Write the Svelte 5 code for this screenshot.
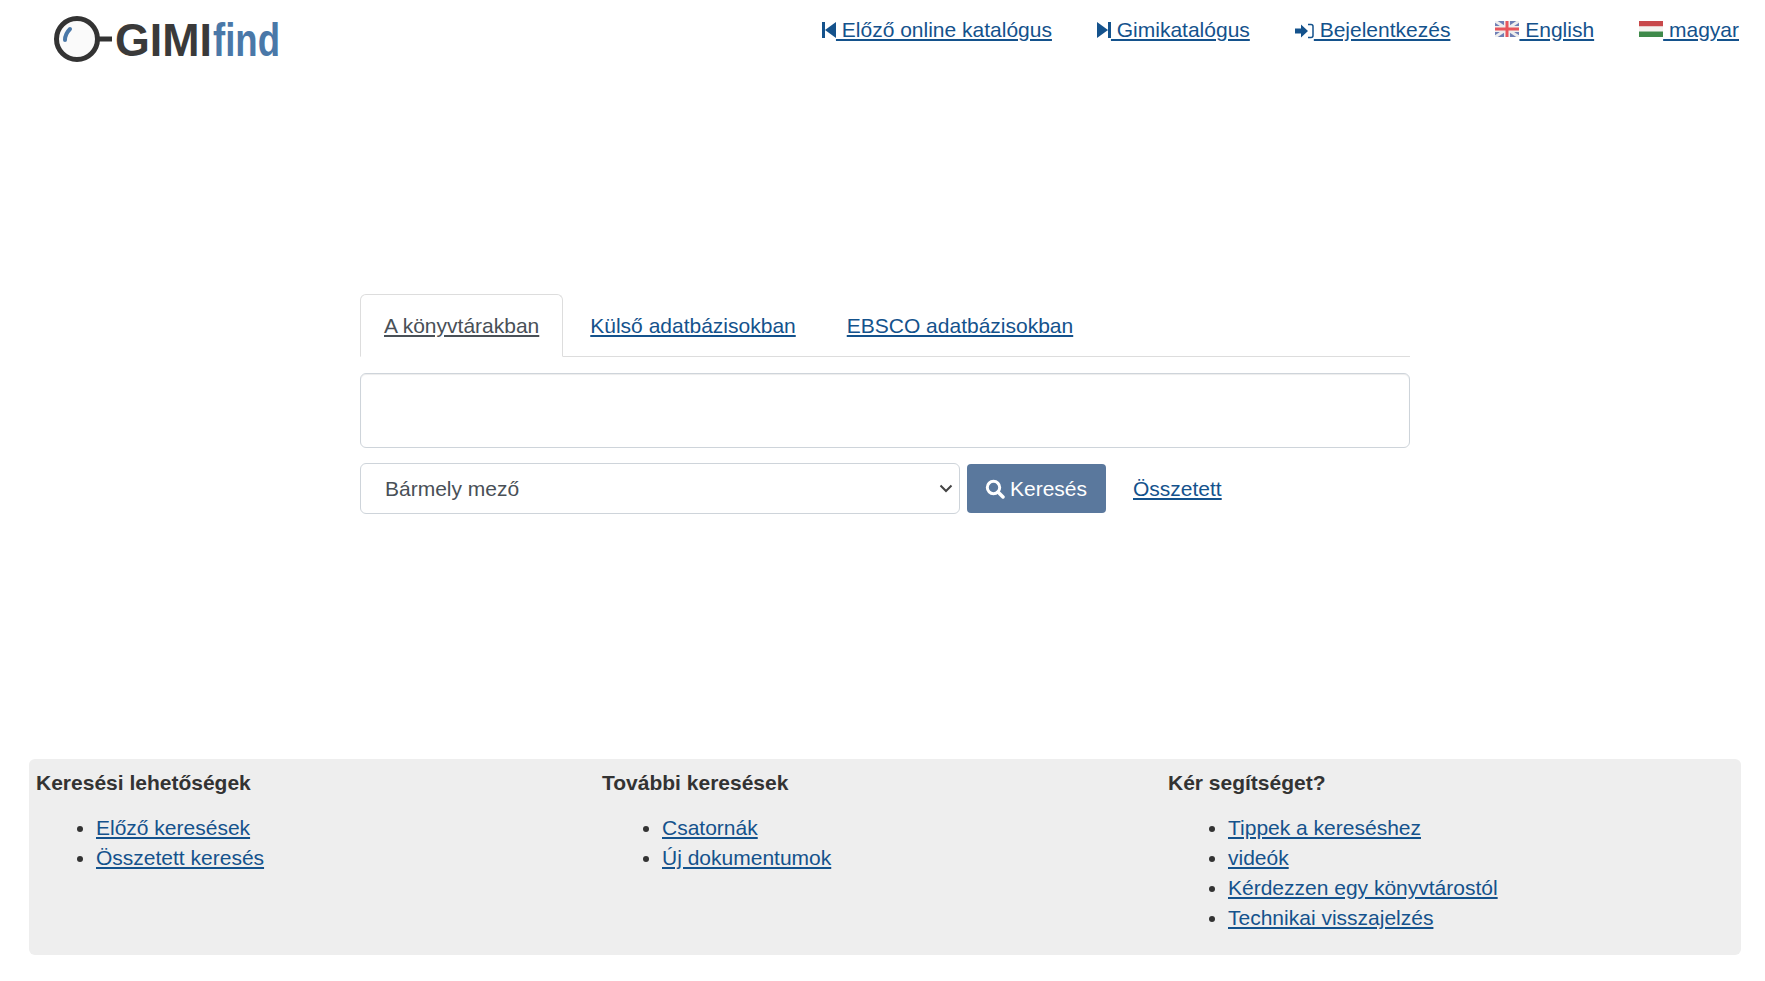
<script lang="ts">
  const columns = [
    { title: "Keresési lehetőségek", links: ["Előző keresések", "Összetett keresés"] },
    { title: "További keresések", links: ["Csatornák", "Új dokumentumok"] },
    {
      title: "Kér segítséget?",
      links: ["Tippek a kereséshez", "videók", "Kérdezzen egy könyvtárostól", "Technikai visszajelzés"],
    },
  ];
  const tabs = ["A könyvtárakban", "Külső adatbázisokban", "EBSCO adatbázisokban"];
  let activeTab = $state(0);
  let query = $state("");
</script>

<header class="topbar">
  <a class="logo" href="#home" aria-label="GIMIfind">
    <svg width="250" height="60" viewBox="0 0 250 60">
      <circle cx="25" cy="31" r="20.500" fill="#fafafa" stroke="#333" stroke-width="5" />
      <path d="M13 32 C13 27 15 24 18 21" fill="none" stroke="#4a78a8" stroke-width="4" stroke-linecap="round" />
      <path d="M46 31 H60" stroke="#333" stroke-width="5" />
      <text class="gimi" x="63" y="48" textLength="97" lengthAdjust="spacingAndGlyphs">GIMI</text>
      <text class="find" x="161" y="48" textLength="67" lengthAdjust="spacingAndGlyphs">find</text>
    </svg>
  </a>
  <nav class="topnav">
    <a href="#prev">
      <svg width="14" height="20" viewBox="0 0 14 20"><path d="M0 2h3v16H0zM14 2v16L3 10z" fill="#14528c" /></svg>
      Előző online katalógus</a>
    <a href="#gimi">
      <svg width="14" height="20" viewBox="0 0 14 20"><path d="M0 2v16l11-8zM11 2h3v16h-3z" fill="#14528c" /></svg>
      Gimikatalógus</a>
    <a href="#login">
      <svg width="19" height="18" viewBox="0 0 19 18">
        <path d="M0 6.500h6V2.500L13 9l-7 6.500v-4H0z" fill="#14528c" />
        <path d="M13 2.500h3a2 2 0 0 1 2 2v9a2 2 0 0 1-2 2h-3" fill="none" stroke="#14528c" stroke-width="1.500" />
      </svg>
      Bejelentkezés</a>
    <a href="#en">
      <svg class="flag" width="24" height="16" viewBox="0 0 24 16">
        <rect width="24" height="16" fill="#6f7fb5" />
        <path d="M0 0l24 16M24 0L0 16" stroke="#eee" stroke-width="3" />
        <path d="M12 0v16M0 8h24" stroke="#eee" stroke-width="6" />
        <path d="M12 0v16M0 8h24" stroke="#e8565c" stroke-width="3" />
      </svg>
      English</a>
    <a href="#hu">
      <svg class="flag" width="24" height="16" viewBox="0 0 24 16">
        <rect width="24" height="5.500" fill="#c8494a" />
        <rect y="5.500" width="24" height="5" fill="#f4f4f0" />
        <rect y="10.500" width="24" height="5.500" fill="#3f8a4a" />
      </svg>
      magyar</a>
  </nav>
</header>

<main class="search">
  <ul class="tabs">
    {#each tabs as tab, i}
      <li class:active={i === activeTab}>
        <a href="#tab" onclick={(e) => { e.preventDefault(); activeTab = i; }}>{tab}</a>
      </li>
    {/each}
  </ul>
  <input class="query" type="text" bind:value={query} aria-label="Keresés" />
  <div class="controls">
    <div class="select-wrap">
      <select class="field" aria-label="Mező">
        <option>Bármely mező</option>
      </select>
      <svg class="chevron" width="14" height="9" viewBox="0 0 14 9">
        <path d="M1.500 1.500L7 7l5.500-5.500" fill="none" stroke="#444" stroke-width="2" />
      </svg>
    </div>
    <button class="go">
      <svg width="20" height="20" viewBox="0 0 20 20">
        <circle cx="8.500" cy="8.500" r="6.200" fill="none" stroke="#fff" stroke-width="3" />
        <path d="M13 13l5 5" stroke="#fff" stroke-width="3.500" stroke-linecap="round" />
      </svg>
      Keresés
    </button>
    <a class="advanced" href="#advanced">Összetett</a>
  </div>
</main>

<footer class="links">
  {#each columns as col}
    <section>
      <h2>{col.title}</h2>
      <ul>
        {#each col.links as link}
          <li><a href="#link">{link}</a></li>
        {/each}
      </ul>
    </section>
  {/each}
</footer>

<style>
  :global(body) {
    margin: 0;
    background: #fff;
    color: #333;
    font-family: "Liberation Sans", Arial, sans-serif;
    font-size: 21px;
    line-height: 30px;
  }
  a {
    color: #14528c;
    text-decoration: underline;
  }
  .topbar {
    display: flex;
    justify-content: space-between;
    height: 294px;
    box-sizing: border-box;
    padding: 8px 26px 0 52px;
  }
  .logo {
    display: block;
    height: 60px;
  }
  .logo svg {
    display: block;
  }
  .gimi,
  .find {
    font-family: "Liberation Sans", Arial, sans-serif;
    font-weight: 700;
    font-size: 46px;
  }
  .gimi {
    fill: #3a3a3a;
  }
  .find {
    fill: #4a78a8;
  }
  .topnav {
    display: flex;
    gap: 45px;
    padding-top: 7px;
    height: 30px;
  }
  .topnav svg {
    vertical-align: -3px;
  }
  .topnav svg.flag {
    vertical-align: 0;
  }
  .search {
    width: 1050px;
    margin-left: 360px;
    height: 465px;
  }
  .tabs {
    display: flex;
    list-style: none;
    margin: 0 0 16px;
    padding: 0;
    height: 63px;
    box-sizing: border-box;
    border-bottom: 1px solid #ddd;
  }
  .tabs li {
    box-sizing: border-box;
    height: 63px;
    padding: 16px 24px 0 25px;
    border: 1px solid transparent;
  }
  .tabs li.active {
    padding: 16px 23px 0 23px;
    margin-right: 1px;
    background: #fff;
    border-color: #ddd #ddd #fff;
    border-radius: 6px 6px 0 0;
  }
  .tabs li.active a {
    color: #495057;
  }
  .query {
    display: block;
    box-sizing: border-box;
    width: 100%;
    height: 75px;
    margin-bottom: 15px;
    border: 1px solid #ced4da;
    border-radius: 6px;
    box-shadow: inset 0 1px 1px rgba(0, 0, 0, 0.075);
    font: inherit;
    padding: 6px 24px;
  }
  .controls {
    display: flex;
    align-items: center;
    height: 51px;
  }
  .select-wrap {
    position: relative;
    width: 600px;
    height: 51px;
    margin-right: 7px;
  }
  .field {
    appearance: none;
    display: block;
    width: 100%;
    height: 100%;
    box-sizing: border-box;
    padding: 0 24px;
    border: 1px solid #ced4da;
    border-radius: 6px;
    background-color: #fff;
    color: #495057;
    font: inherit;
  }
  .chevron {
    position: absolute;
    right: 7px;
    top: 21px;
    pointer-events: none;
  }
  .go {
    display: flex;
    align-items: center;
    gap: 5px;
    height: 49px;
    width: 139px;
    box-sizing: border-box;
    padding: 0 0 0 18px;
    margin-right: 27px;
    border: 0;
    border-radius: 4px;
    background: #5a789d;
    color: #fff;
    font: inherit;
  }
  .links {
    display: grid;
    grid-template-columns: repeat(3, 1fr);
    box-sizing: border-box;
    height: 196px;
    margin: 0 24px 0 29px;
    padding: 9px 7px 7px;
    border-radius: 6px;
    background: #eee;
  }
  .links h2 {
    margin: 0 0 15px;
    font-size: 21px;
    font-weight: 700;
    line-height: 30px;
  }
  .links ul {
    margin: 0;
    padding-left: 60px;
  }
</style>
